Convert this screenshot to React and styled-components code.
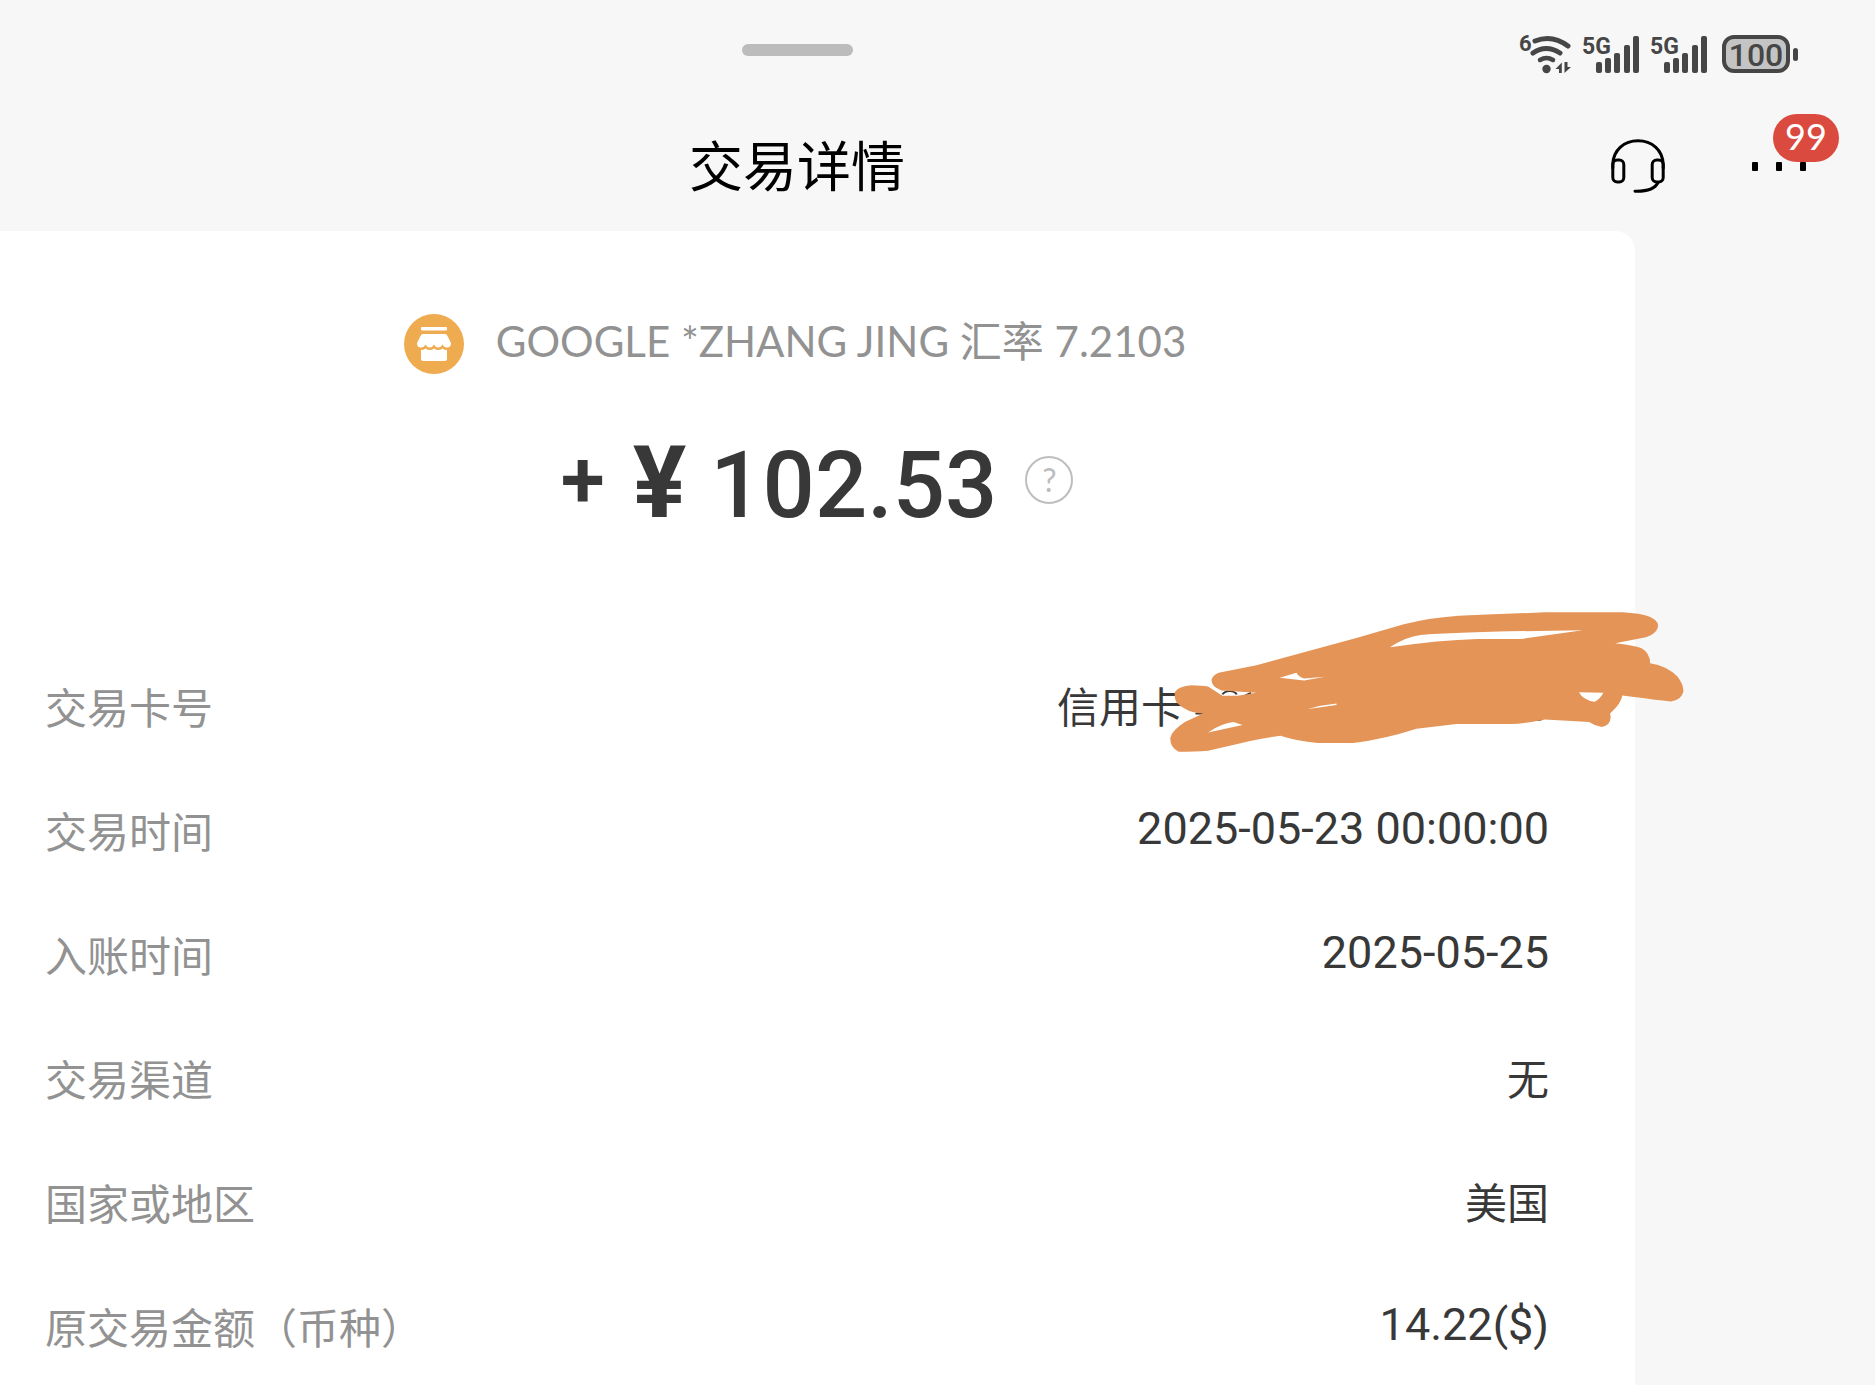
import styled, { createGlobalStyle } from "styled-components";

const GlobalStyle = createGlobalStyle`
  * {
    box-sizing: border-box;
  }

  body {
    margin: 0;
    background-color: #f7f7f7;
    font-family: "Noto Sans CJK SC", "Noto Sans", sans-serif;
  }
`;

const StyledPage = styled.div`
  display: flex;
  flex-direction: column;
  min-height: 100vh;
  overflow: hidden;
`;

const StyledStatusBar = styled.div`
  display: grid;
  grid-template-columns: 1fr 281px;
  height: 104px;
`;

const StyledHandle = styled.div`
  width: 111px;
  height: 12px;
  margin: 44px auto 0;
  border-radius: 6px;
  background-color: #bcbcbc;
`;

const StyledStatusIcons = styled.div`
  display: flex;
  align-items: center;
  justify-content: flex-end;
  gap: 12px;
  height: 40px;
  margin-top: 34px;
  padding-right: 77px;

  svg {
    flex: none;
    overflow: visible;
  }
`;

const StyledBattery = styled.div`
  display: flex;
  align-items: center;
  gap: 3px;
  margin-left: 3px;

  &::after {
    content: "";
    width: 5px;
    height: 13px;
    border-radius: 3px;
    background-color: #464646;
  }
`;

const StyledBatteryLevel = styled.span`
  width: 68px;
  height: 38px;
  border: 4px solid #464646;
  border-radius: 12px;
  background-color: #c4c4c4;
  color: #464646;
  font-family: Roboto, sans-serif;
  font-size: 32px;
  font-weight: 500;
  line-height: 32px;
  text-align: center;
`;

const StyledHeader = styled.header`
  display: grid;
  grid-template-columns: 1fr 281px;
  align-items: center;
  height: 127px;
  padding-bottom: 4px;
`;

const StyledTitle = styled.h1`
  margin: 0;
  padding-bottom: 4px;
  color: #000000;
  font-size: 54px;
  font-weight: 400;
  line-height: 80px;
  text-align: center;
`;

const StyledActions = styled.div`
  display: flex;
  align-items: center;
  gap: 86px;
  padding-left: 17px;
`;

const StyledIconButton = styled.button`
  position: relative;
  display: flex;
  padding: 0;
  border: none;
  background: none;
  cursor: pointer;
`;

const StyledBadge = styled.span`
  position: absolute;
  left: 22px;
  bottom: 11px;
  width: 66px;
  height: 48px;
  border-radius: 24px;
  background-color: #da4a3f;
  color: #ffffff;
  font-family: Lato, sans-serif;
  font-size: 36px;
  line-height: 44px;
  text-align: center;
`;

const StyledCard = styled.main`
  flex: 1;
  margin-right: 240px;
  padding: 80px 86px 26px 45px;
  border-radius: 0 20px 0 0;
  background-color: #ffffff;
`;

const StyledMerchant = styled.div`
  display: flex;
  align-items: center;
  justify-content: center;
  gap: 32px;
  height: 66px;
  padding-right: 4px;
  color: #929292;
  font-family: Lato, "Noto Sans CJK SC", sans-serif;
  font-size: 42px;
  white-space: nowrap;
`;

const StyledMerchantName = styled.span`
  padding-bottom: 12px;
`;

const StyledAmount = styled.div`
  display: flex;
  align-items: center;
  justify-content: center;
  gap: 28px;
  height: 120px;
  margin-top: 43px;
  padding-left: 40px;
  color: #383838;
  font-family: Roboto, sans-serif;
  font-weight: 500;
  line-height: 120px;
  white-space: nowrap;
`;

const StyledSign = styled.span`
  font-size: 80px;
  font-weight: 600;
`;

const StyledMoney = styled.span`
  display: flex;
  align-items: baseline;
  gap: 24px;
  padding-top: 8px;
  font-size: 92px;
`;

const StyledCurrency = styled.span`
  font-size: 100px;
  font-weight: 700;
`;

const StyledHelp = styled.button`
  width: 48px;
  height: 48px;
  padding: 0;
  border: 2px solid #bdbdbd;
  border-radius: 50%;
  background: none;
  color: #bdbdbd;
  font-family: Lato, sans-serif;
  font-size: 32px;
  line-height: 42px;
  cursor: pointer;
`;

const StyledDetails = styled.dl`
  display: flex;
  flex-direction: column;
  gap: 64px;
  margin: 137px 0 0;
`;

const StyledRow = styled.div`
  display: flex;
  align-items: center;
  justify-content: space-between;
  height: 60px;
`;

const StyledLabel = styled.dt`
  padding-bottom: 2px;
  color: #929292;
  font-size: 42px;
  line-height: 60px;
`;

const StyledValue = styled.dd`
  display: flex;
  margin: 0;
  padding-bottom: 4px;
  color: #383838;
  font-family: ${(props) => (props.$numeric ? 'Roboto, "Noto Sans CJK SC"' : '"Noto Sans CJK SC"')}, sans-serif;
  font-size: ${(props) => (props.$numeric ? "45px" : "42px")};
  line-height: ${(props) => (props.$numeric ? "52px" : "60px")};
`;

const StyledHiddenNumber = styled.span`
  position: relative;
  width: 366px;
`;

const StyledScribble = styled.svg`
  position: absolute;
  top: -65px;
  left: -17px;
  width: 522px;
  height: 143px;
`;

const WifiIcon = () => (
  <svg width="52" height="40" viewBox="0 0 52 40" fill="none" stroke="#464646" strokeLinecap="round">
    <text x="0" y="17" fill="#464646" stroke="none" fontFamily="Roboto" fontWeight="700" fontSize="22">6</text>
    <path d="M16 7Q33 0 49 12" strokeWidth="5" />
    <path d="M14 19Q27 10 41 19" strokeWidth="5" />
    <path d="M21 26Q27.500 22 34 26" strokeWidth="4.500" />
    <circle cx="27.500" cy="35" r="4.200" fill="#464646" stroke="none" />
    <path d="M42.800 39V28.500L36.500 35H40V39ZM45.500 28V39L52 33H48.500V28Z" fill="#464646" stroke="none" />
  </svg>
);

const SignalIcon = () => (
  <svg width="56" height="40" viewBox="0 0 56 40" fill="#464646">
    <text x="-1" y="20" fontFamily="Roboto" fontWeight="700" fontSize="23">5G</text>
    <rect x="13" y="28" width="6" height="11" rx="2" />
    <rect x="22" y="24" width="6" height="15" rx="2" />
    <rect x="31" y="19" width="6" height="20" rx="2" />
    <rect x="41" y="11" width="6" height="28" rx="2" />
    <rect x="50" y="2" width="6" height="37" rx="2" />
  </svg>
);

const HeadsetIcon = () => (
  <svg width="54" height="54" viewBox="0 0 54 54" fill="none" stroke="#000000" strokeWidth="3" strokeLinecap="round">
    <path d="M1.800 29V25C2.500 11 13 1.800 27 1.800S51.500 11 52.200 25V29" />
    <rect x="1.800" y="21" width="11" height="22" rx="4.500" />
    <rect x="41.200" y="21" width="11" height="22" rx="4.500" />
    <path d="M47 43.500C44 50 37 52.500 24 52.200" />
  </svg>
);

const MoreIcon = () => (
  <svg width="56" height="14" viewBox="0 0 56 14">
    <rect x="1" y="3" width="6" height="9" rx="1" />
    <rect x="25" y="3" width="6" height="9" rx="1" />
    <rect x="49" y="3" width="6" height="9" rx="1" />
  </svg>
);

const ShopIcon = () => (
  <svg width="60" height="60" viewBox="0 0 60 60" fill="#ffffff">
    <circle cx="30" cy="30" r="30" fill="#efab50" />
    <rect x="17" y="13" width="26" height="3.500" rx="1" />
    <path d="M19 20H41Q43 20 44 23L47 29Q47 33.500 43 33.500Q40 33.500 38.500 30.500Q37 33.500 34.200 33.500Q31.500 33.500 30 30.500Q28.500 33.500 25.800 33.500Q23 33.500 21.500 30.500Q20 33.500 17 33.500Q13 33.500 13 29L16 23Q17 20 19 20Z" />
    <path d="M17 36Q20 36 21.500 34.500Q23.500 36 25.800 36Q28 36 30 34.500Q32 36 34.200 36Q36.500 36 38.500 34.500Q40 36 43 36V45Q43 47 41 47H19Q17 47 17 45Z" />
  </svg>
);

const Scribble = () => (
  <StyledScribble viewBox="300 30 1240 430" preserveAspectRatio="none" aria-hidden="true">
    <g fill="none" stroke="#383838" strokeWidth="5">
      <path d="M370 342H392M434 284Q440 273 452 274Q464 275 468 284M488 287L502 279M1172 358Q1184 364 1195 358" />
    </g>
    <path
      fill="#e59457"
      fillRule="evenodd"
      d="M425 219L515 196L750 115L865 73Q920 54 995 47Q1100 42 1200 37H1385Q1468 43 1469 77Q1468 100 1440 112L1367 130Q1410 136 1430 145Q1450 160 1450 190Q1490 198 1515 230Q1530 255 1529 275Q1525 300 1500 305Q1480 303 1384 287Q1382 310 1355 341Q1361 375 1335 382Q1318 378 1305 367L1200 359Q1150 372 1120 373H990L895 387Q820 418 745 430H660Q610 424 572 408Q530 416 500 424L400 453Q370 456 330 456Q310 445 310 415Q314 392 345 367L388 341Q350 340 325 308Q318 290 322 275Q332 258 360 256Q385 257 400 260L434 288L470 288L515 279L432 272Q408 262 408 240Q412 225 425 219Z
        M832 142Q870 110 905 105Q1000 95 1290 91L1145 117H1040Q950 120 832 142Z
        M570 234L610 219Q615 232 628 236L678 231L628 242Z
        M638 328Q670 315 705 311V316Z
        M1281 277L1339 279Q1330 300 1318 306Q1290 300 1281 277Z
        M400 398Q430 372 460 367L482 376Z"
    />
  </StyledScribble>
);

const details = [
  { label: "交易卡号", value: "信用卡", hidden: true },
  { label: "交易时间", value: "2025-05-23 00:00:00", numeric: true },
  { label: "入账时间", value: "2025-05-25", numeric: true },
  { label: "交易渠道", value: "无" },
  { label: "国家或地区", value: "美国" },
  { label: "原交易金额（币种）", value: "14.22($)", numeric: true },
];

const App = () => {
  return (
    <>
      <GlobalStyle />
      <StyledPage lang="zh-CN">
        <StyledStatusBar>
          <StyledHandle />
          <StyledStatusIcons>
            <WifiIcon />
            <SignalIcon />
            <SignalIcon />
            <StyledBattery>
              <StyledBatteryLevel>100</StyledBatteryLevel>
            </StyledBattery>
          </StyledStatusIcons>
        </StyledStatusBar>
        <StyledHeader>
          <StyledTitle>交易详情</StyledTitle>
          <StyledActions>
            <StyledIconButton aria-label="客服">
              <HeadsetIcon />
            </StyledIconButton>
            <StyledIconButton aria-label="更多">
              <MoreIcon />
              <StyledBadge>99</StyledBadge>
            </StyledIconButton>
          </StyledActions>
        </StyledHeader>
        <StyledCard>
          <StyledMerchant>
            <ShopIcon />
            <StyledMerchantName>GOOGLE *ZHANG JING 汇率 7.2103</StyledMerchantName>
          </StyledMerchant>
          <StyledAmount>
            <StyledSign>+</StyledSign>
            <StyledMoney>
              <StyledCurrency>¥</StyledCurrency>
              <span>102.53</span>
            </StyledMoney>
            <StyledHelp aria-label="说明">?</StyledHelp>
          </StyledAmount>
          <StyledDetails>
            {details.map((item) => (
              <StyledRow key={item.label}>
                <StyledLabel>{item.label}</StyledLabel>
                <StyledValue $numeric={item.numeric}>
                  {item.value}
                  {item.hidden && (
                    <StyledHiddenNumber>
                      <Scribble />
                    </StyledHiddenNumber>
                  )}
                </StyledValue>
              </StyledRow>
            ))}
          </StyledDetails>
        </StyledCard>
      </StyledPage>
    </>
  );
};

export default App;
